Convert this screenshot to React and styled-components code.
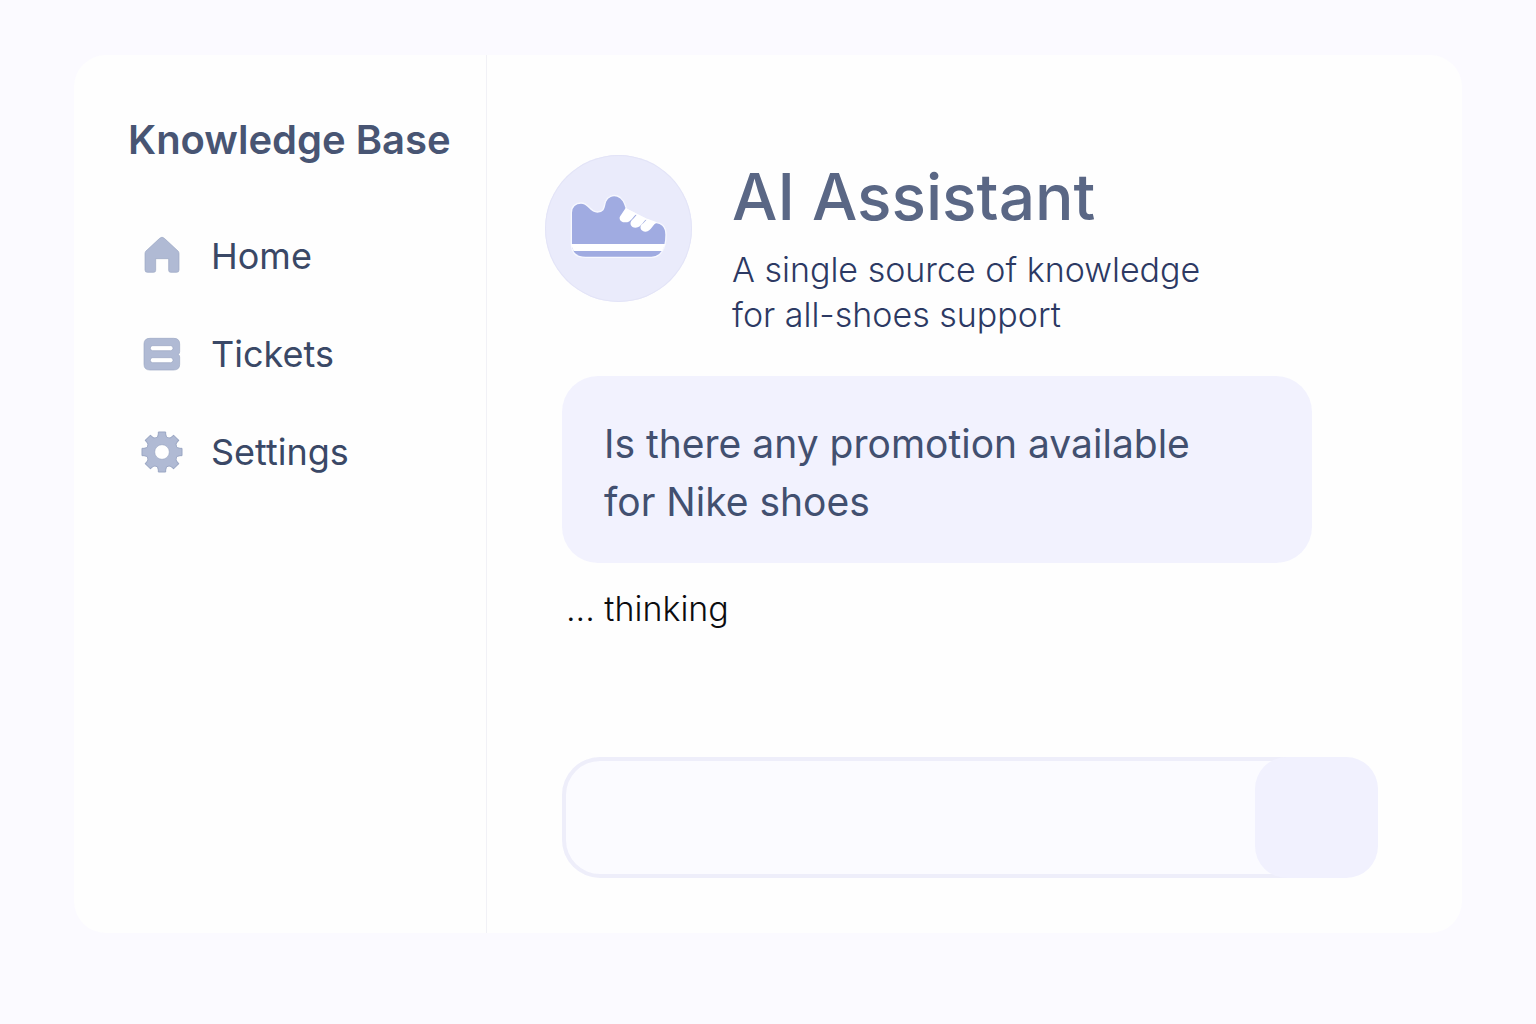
import React, { useState } from 'react';
import styled, { createGlobalStyle } from 'styled-components';

const HomeIcon = () => (
    <svg width="42" height="42" viewBox="0 0 126 126" aria-hidden="true">
        <path
            d="M56 10 Q63 3 70 10 L111 48 Q114 51 114 56 V105 Q114 112 107 112 H89 Q83 112 83 106 V71 H44 V106 Q44 112 38 112 H19 Q12 112 12 105 V56 Q12 51 15 48 Z"
            fill="#b0bad4"
            stroke="#9aa6c3"
            strokeWidth="2"
        />
    </svg>
);

const TicketsIcon = () => (
    <svg width="42" height="42" viewBox="0 0 126 126" aria-hidden="true">
        <path
            d="M27 16 H98 Q116 16 116 33 V56 Q116 61 112 64 Q116 67 116 72 V94 Q116 111 98 111 H27 Q9 111 9 94 V33 Q9 16 27 16 Z"
            fill="#b0bad4"
            stroke="#9aa6c3"
            strokeWidth="2"
        />
        <rect x="28" y="38" width="68" height="15" rx="7" fill="#fff" stroke="#9aa6c3" strokeWidth="2" />
        <rect x="28" y="74" width="68" height="15" rx="7" fill="#fff" stroke="#9aa6c3" strokeWidth="2" />
    </svg>
);

const teeth = [0, 45, 90, 135, 180, 225, 270, 315];

const SettingsIcon = () => (
    <svg width="42" height="42" viewBox="-63 -63 126 126" aria-hidden="true">
        <g fill="#b0bad4" stroke="#9aa6c3" strokeWidth="3" strokeLinejoin="round">
            <circle r="46" />
            {teeth.map(angle => (
                <path key={angle} d="M-18 -42 Q-11 -46 -11 -54 V-60 H11 V-54 Q11 -46 18 -42 Z" transform={`rotate(${angle})`} />
            ))}
        </g>
        <circle r="46" fill="#b0bad4" />
        <circle r="22" fill="#fff" stroke="#9aa6c3" strokeWidth="2" />
    </svg>
);

const ShoeIcon = () => (
    <svg width="148" height="148" viewBox="45 45 444 444" aria-hidden="true">
        <path
            d="M124 312 V218 C124 200 137 189 153 189 C178 189 178 216 202 216 C226 216 221 198 227 184 C233 169 248 164 262 168 C279 174 284 190 290 208 L370 249 C394 243 408 262 408 284 C408 324 394 352 364 352 H166 C145 352 124 345 124 312 Z"
            fill="#a0abe1"
            stroke="#f7f8ff"
            strokeWidth="4"
            strokeLinejoin="round"
        />
        <path d="M122 312 H406 L397 333 H131 Z" fill="#fff" />
        <g fill="#fff">
            <path d="M287 204 L321 221 C309 228 304 247 286 247 C270 248 264 234 273 225 Z" />
            <path d="M322 222 L351 236 C339 243 335 262 317 263 C302 263 297 249 306 240 C313 234 317 228 322 222 Z" />
            <path d="M352 236 L381 247 C368 253 364 274 347 275 C332 275 327 261 336 253 C343 247 347 242 352 236 Z" />
        </g>
    </svg>
);

const links = [
    { label: 'Home', Icon: HomeIcon },
    { label: 'Tickets', Icon: TicketsIcon },
    { label: 'Settings', Icon: SettingsIcon },
];

const App = () => {
    const [draft, setDraft] = useState('');
    const handleSubmit = e => {
        e.preventDefault();
        setDraft('');
    };

    return (
        <Page>
            <GlobalStyle />
            <Card>
                <Sidebar>
                    <SidebarTitle>Knowledge Base</SidebarTitle>
                    <Nav>
                        {links.map(({ label, Icon }) => (
                            <NavLink href="#" key={label}>
                                <Icon />
                                {label}
                            </NavLink>
                        ))}
                    </Nav>
                </Sidebar>
                <Main>
                    <Header>
                        <Avatar>
                            <ShoeIcon />
                        </Avatar>
                        <div>
                            <Title>AI Assistant</Title>
                            <Subtitle>
                                A single source of knowledge
                                <br />
                                for all-shoes support
                            </Subtitle>
                        </div>
                    </Header>
                    <Chat>
                        <Message>
                            Is there any promotion available
                            <br />
                            for Nike shoes
                        </Message>
                        <Status>... thinking</Status>
                        <Composer onSubmit={handleSubmit}>
                            <MessageInput aria-label="Message" value={draft} onChange={e => setDraft(e.target.value)} />
                            <SendButton type="submit" aria-label="Send" />
                        </Composer>
                    </Chat>
                </Main>
            </Card>
        </Page>
    );
};

export default App;

const GlobalStyle = createGlobalStyle`
    * {
        box-sizing: border-box;
    }
    body {
        margin: 0;
        background: #fbfaff;
        font-family: Inter, sans-serif;
    }
`;

const Page = styled.div`
    display: flex;
    min-height: 100vh;
    padding: 55px 74px 91px;
`;

const Card = styled.div`
    display: grid;
    grid-template-columns: 413px 1fr;
    flex: 1;
    border-radius: 32px;
    background: #fefefe;
`;

const Sidebar = styled.aside`
    padding: 61px 24px 60px 54px;
    border-right: 1px solid #f1f1f6;
`;

const SidebarTitle = styled.h2`
    margin: 0;
    font-size: 40px;
    font-weight: 600;
    line-height: 48px;
    white-space: nowrap;
    color: #485573;
`;

const Nav = styled.nav`
    display: flex;
    flex-direction: column;
    gap: 50px;
    margin-top: 68px;
    padding-left: 13px;
`;

const NavLink = styled.a`
    display: flex;
    align-items: center;
    gap: 28px;
    font-size: 36px;
    line-height: 48px;
    color: #3a4866;
    text-decoration: none;
`;

const Main = styled.main`
    display: flex;
    flex-direction: column;
    padding: 100px 84px 55px 58px;
`;

const Header = styled.header`
    display: flex;
    gap: 40px;
`;

const Avatar = styled.div`
    flex: none;
    width: 147px;
    height: 147px;
    border-radius: 50%;
    background: #eaebfb;
    box-shadow: inset 0 0 0 1px #e3e4f7;
`;

const Title = styled.h1`
    margin: 0;
    font-size: 64px;
    font-weight: 500;
    line-height: 84px;
    color: #5a6785;
`;

const Subtitle = styled.p`
    margin: 8px 0 0;
    font-size: 34px;
    font-weight: 300;
    line-height: 45px;
    color: #2c3963;
`;

const Chat = styled.section`
    display: flex;
    flex: 1;
    flex-direction: column;
    padding-left: 17px;
`;

const Message = styled.div`
    margin: 39px 66px 0 0;
    padding: 39px 42px 32px;
    border-radius: 36px;
    background: #f2f2fe;
    font-size: 39px;
    line-height: 58px;
    color: #425070;
`;

const Status = styled.p`
    margin: 22px 0 0;
    padding-left: 4px;
    font-size: 34px;
    font-weight: 300;
    line-height: 48px;
    color: #0c0c10;
`;

const Composer = styled.form`
    display: flex;
    height: 121px;
    margin-top: auto;
    border-radius: 38px;
    background: #fbfbff;
    box-shadow: inset 0 0 0 4px #eeeefa;
`;

const MessageInput = styled.input`
    flex: 1;
    min-width: 0;
    padding: 0 38px;
    border: 0;
    outline: 0;
    background: transparent;
    font: inherit;
    font-size: 36px;
    color: #425070;
`;

const SendButton = styled.button`
    width: 123px;
    border: 0;
    border-radius: 32px;
    background: #f1f1fe;
    cursor: pointer;
`;
